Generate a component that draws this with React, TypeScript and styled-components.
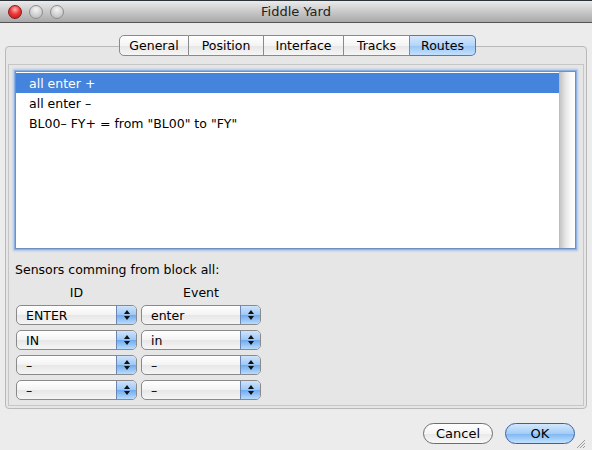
import React from "react";
import styled, { createGlobalStyle } from "styled-components";

const Global = createGlobalStyle`
  html, body { margin: 0; padding: 0; background: #ececec; }
  body { font-family: "DejaVu Sans", "Liberation Sans", sans-serif; }
  * { box-sizing: border-box; }
`;

const Window = styled.div`
  width: 592px;
  height: 450px;
  background: #ececec;
  display: flex;
  flex-direction: column;
  overflow: hidden;
  font-size: 12px;
  color: #000;
`;

const TitleBar = styled.div`
  height: 23px;
  flex: none;
  border-top: 1px solid #2b3338;
  border-bottom: 1px solid #555;
  background: linear-gradient(#ebebeb, #c9c9c9 50%, #a9a9a9);
  display: flex;
  align-items: center;
  padding-left: 8px;
  position: relative;
`;

const Lights = styled.div`
  display: flex;
  gap: 7px;
`;

const Light = styled.span<{ $red?: boolean }>`
  width: 14px;
  height: 14px;
  border-radius: 50%;
  border: 1px solid ${(p) => (p.$red ? "#8a1a1a" : "#8e8e8e")};
  background: ${(p) =>
    p.$red
      ? "radial-gradient(circle at 50% 30%, #ffb3b3 0%, #ee3a3a 45%, #b81212 100%)"
      : "radial-gradient(circle at 50% 30%, #f4f4f4 0%, #d4d4d4 50%, #b3b3b3 100%)"};
`;

const Title = styled.div`
  position: absolute;
  left: 0;
  right: 0;
  text-align: center;
  font-size: 13px;
  color: #222;
  pointer-events: none;
`;

const Body = styled.div`
  flex: 1;
  display: flex;
  flex-direction: column;
  padding: 12px 5px 0 5px;
`;

const TabRow = styled.div`
  display: flex;
  justify-content: center;
  position: relative;
  z-index: 1;
  padding-left: 3px;
`;

const Tab = styled.div<{ $active?: boolean; $w: number }>`
  width: ${(p) => p.$w}px;
  height: 21px;
  display: flex;
  align-items: center;
  justify-content: center;
  font-size: 12.5px;
  border: 1px solid #8a8a8a;
  border-left: none;
  background: ${(p) =>
    p.$active
      ? "linear-gradient(#d6e8fc, #b4d5f8 50%, #98c5f6 51%, #c3e0fc)"
      : "linear-gradient(#ffffff, #f4f4f4 50%, #e6e6e6 51%, #f6f6f6)"};
  ${(p) => (p.$active ? "border-color: #5479b3;" : "")}
  &:first-child {
    border-left: 1px solid #8a8a8a;
    border-radius: 5px 0 0 5px;
  }
  &:last-child {
    border-radius: 0 5px 5px 0;
  }
`;

const Panel = styled.div`
  margin-top: -10px;
  height: 363px;
  border: 1px solid #b9b9b9;
  border-radius: 4px;
  background: #e6e6e6;
  padding: 17px 2px 2px 2px;
  display: flex;
`;

const Inner = styled.div`
  flex: 1;
  border: 1px solid #c6c6c6;
  background: #e6e6e6;
  padding: 6px 7px 0 6px;
  display: flex;
  flex-direction: column;
`;

const ListBox = styled.div`
  height: 178px;
  flex: none;
  background: #fff;
  border: 1px solid #6f8fbf;
  box-shadow: 0 0 0 1px #8fb2e2, 0 0 2px 2px #a9c6ec;
  display: flex;
`;

const ListRows = styled.div`
  flex: 1;
  display: flex;
  flex-direction: column;
  padding-top: 1px;
`;

const Row = styled.div<{ $sel?: boolean }>`
  height: 20px;
  display: flex;
  align-items: center;
  padding-left: 13px;
  font-size: 12.5px;
  background: ${(p) => (p.$sel ? "#4584dc" : "transparent")};
  color: ${(p) => (p.$sel ? "#fff" : "#000")};
`;

const ScrollTrack = styled.div`
  width: 16px;
  flex: none;
  background: linear-gradient(90deg, #c6c6c6, #e8e8e8 40%, #f8f8f8 70%, #ffffff);
  border-left: 1px solid #bdbdbd;
`;

const SectionLabel = styled.div`
  margin-top: 14px;
  font-size: 12.5px;
  height: 14px;
  line-height: 14px;
`;

const Grid = styled.div`
  margin-top: 9px;
  display: grid;
  grid-template-columns: 121px 120px;
  column-gap: 4px;
  row-gap: 5px;
  padding-left: 1px;
`;

const ColHead = styled.div`
  text-align: center;
  font-size: 12.5px;
  height: 14px;
  line-height: 14px;
`;

const Popup = styled.div`
  height: 20px;
  border: 1px solid #8a8a8a;
  border-radius: 5px;
  background: linear-gradient(#ffffff, #f3f3f3 50%, #e7e7e7 51%, #f5f5f5);
  display: flex;
  overflow: hidden;
  font-size: 12.5px;
`;

const PopupText = styled.div`
  flex: 1;
  display: flex;
  align-items: center;
  padding-left: 9px;
`;

const PopupArrow = styled.div`
  width: 20px;
  flex: none;
  border-left: 1px solid #6a86b4;
  background: linear-gradient(#cfe3fb, #9cc8f5 50%, #6eaaf0 51%, #b9dcfb);
  display: flex;
  align-items: center;
  justify-content: center;
`;

const Footer = styled.div`
  flex: 1;
  display: flex;
  justify-content: flex-end;
  align-items: flex-start;
  gap: 12px;
  padding: 14px 12px 0 0;
  position: relative;
`;

const Button = styled.div<{ $default?: boolean }>`
  width: 70px;
  height: 21px;
  border-radius: 11px;
  border: 1px solid ${(p) => (p.$default ? "#3c5fa0" : "#6d6d6d")};
  background: ${(p) =>
    p.$default
      ? "linear-gradient(#d3e7fc, #a4cdf7 50%, #7db6f3 51%, #c2e1fd)"
      : "linear-gradient(#ffffff, #f5f5f5 50%, #e8e8e8 51%, #f8f8f8)"};
  display: flex;
  align-items: center;
  justify-content: center;
  font-size: 13px;
`;

const Grip = styled.svg`
  position: absolute;
  right: 1px;
  bottom: 1px;
`;

const Arrows = () => (
  <svg width="8" height="12" viewBox="0 0 8 12">
    <path d="M4 1 L7 5 L1 5 Z" fill="#111" />
    <path d="M4 11 L7 7 L1 7 Z" fill="#111" />
  </svg>
);

const Select = ({ value }: { value: string }) => (
  <Popup>
    <PopupText>{value}</PopupText>
    <PopupArrow>
      <Arrows />
    </PopupArrow>
  </Popup>
);

const tabs: [string, number][] = [
  ["General", 70],
  ["Position", 75],
  ["Interface", 80],
  ["Tracks", 66],
  ["Routes", 66],
];

const rows = ["all enter +", "all enter \u2013", "BL00\u2013 FY+ = from \"BL00\" to \"FY\""];
const sensors: [string, string][] = [
  ["ENTER", "enter"],
  ["IN", "in"],
  ["\u2013", "\u2013"],
  ["\u2013", "\u2013"],
];

export default function App() {
  return (
    <>
      <Global />
      <Window>
        <TitleBar>
          <Lights>
            <Light $red />
            <Light />
            <Light />
          </Lights>
          <Title>Fiddle Yard</Title>
        </TitleBar>
        <Body>
          <TabRow>
            {tabs.map(([t, w]) => (
              <Tab key={t} $w={w} $active={t === "Routes"}>
                {t}
              </Tab>
            ))}
          </TabRow>
          <Panel>
            <Inner>
              <ListBox>
                <ListRows>
                  {rows.map((r, i) => (
                    <Row key={i} $sel={i === 0}>
                      {r}
                    </Row>
                  ))}
                </ListRows>
                <ScrollTrack />
              </ListBox>
              <SectionLabel>Sensors comming from block all:</SectionLabel>
              <Grid>
                <ColHead>ID</ColHead>
                <ColHead>Event</ColHead>
                {sensors.map(([a, b], i) => (
                  <React.Fragment key={i}>
                    <Select value={a} />
                    <Select value={b} />
                  </React.Fragment>
                ))}
              </Grid>
            </Inner>
          </Panel>
          <Footer>
            <Button>Cancel</Button>
            <Button $default>OK</Button>
            <Grip width="11" height="11" viewBox="0 0 11 11">
              <path d="M10 2 L2 10 M10 5 L5 10 M10 8 L8 10" stroke="#9a9a9a" strokeWidth="1" />
            </Grip>
          </Footer>
        </Body>
      </Window>
    </>
  );
}
